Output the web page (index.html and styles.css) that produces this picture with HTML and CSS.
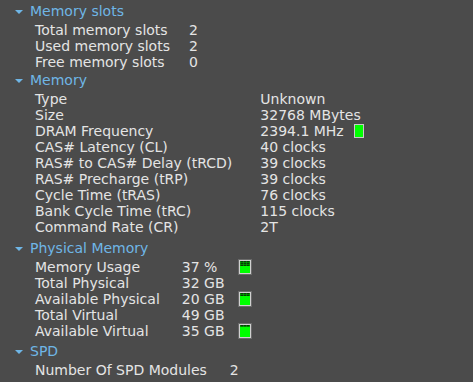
FILE: index.html
```html
<!DOCTYPE html>
<html>
<head>
<meta charset="utf-8">
<link rel="stylesheet" href="styles.css">
</head>
<body>
<div class="tree">
  <div class="section">
    <div class="head"><span class="tri"></span>Memory slots</div>
    <div class="grid">
      <span>Total memory slots</span><span>2</span>
      <span>Used memory slots</span><span>2</span>
      <span>Free memory slots</span><span>0</span>
    </div>
  </div>
  <div class="section">
    <div class="head"><span class="tri"></span>Memory</div>
    <div class="grid wide">
      <span>Type</span><span>Unknown</span>
      <span>Size</span><span>32768 MBytes</span>
      <span>DRAM Frequency</span><span>2394.1 MHz<span class="led"></span></span>
      <span>CAS# Latency (CL)</span><span>40 clocks</span>
      <span>RAS# to CAS# Delay (tRCD)</span><span>39 clocks</span>
      <span>RAS# Precharge (tRP)</span><span>39 clocks</span>
      <span>Cycle Time (tRAS)</span><span>76 clocks</span>
      <span>Bank Cycle Time (tRC)</span><span>115 clocks</span>
      <span>Command Rate (CR)</span><span>2T</span>
    </div>
  </div>
  <div class="section phys">
    <div class="head"><span class="tri"></span>Physical Memory</div>
    <div class="grid three">
      <span>Memory Usage</span><span>37 %</span><span class="meter"><span class="used" style="height:5px"></span></span>
      <span>Total Physical</span><span>32 GB</span><span></span>
      <span>Available Physical</span><span>20 GB</span><span class="meter"><span class="used" style="height:3px"></span></span>
      <span>Total Virtual</span><span>49 GB</span><span></span>
      <span>Available Virtual</span><span>35 GB</span><span class="meter"><span class="used" style="height:2px"></span></span>
    </div>
  </div>
  <div class="section spd">
    <div class="head"><span class="tri"></span>SPD</div>
    <div class="grid">
      <span>Number Of SPD Modules</span><span>2</span>
    </div>
  </div>
</div>
</body>
</html>
```
FILE: styles.css
```css
html, body {
  margin: 0;
  padding: 0;
  background: #4b4b4b;
}
body {
  width: 473px;
  height: 382px;
  overflow: hidden;
  font-family: "DejaVu Sans", Verdana, sans-serif;
  font-size: 14px;
  color: #e4e4e4;
}
.tree {
  padding-top: 1px;
}
.head {
  display: flex;
  align-items: center;
  height: 16px;
  line-height: 16px;
  padding: 2px 0 3px 15px;
  color: #6fb6e6;
}
.section + .section .head {
  padding-top: 2px;
}
.section.phys .head {
  padding-top: 5px;
}
.section.spd .head {
  padding-top: 4px;
}
.tri {
  width: 0;
  height: 0;
  border-left: 4px solid transparent;
  border-right: 4px solid transparent;
  border-top: 4px solid #6fb6e6;
  margin-right: 7px;
  margin-top: 1px;
}
.grid {
  display: grid;
  grid-template-columns: max-content max-content;
  column-gap: 19px;
  padding-left: 35px;
  line-height: 16px;
}
.grid.wide {
  column-gap: 28px;
}
.spd .grid {
  column-gap: 23px;
}
.grid.three {
  grid-template-columns: max-content max-content max-content;
  column-gap: 22px;
}
.grid.three > span:nth-child(3n) {
  margin-left: -8px;
}
.led {
  display: inline-block;
  vertical-align: top;
  margin-top: 1px;
  margin-left: 10px;
  width: 8px;
  height: 12px;
  background: #00ff00;
  border: 1px solid #c8c8c8;
}
.meter {
  display: flex;
  flex-direction: column;
  width: 10px;
  height: 12px;
  margin-top: 1px;
  background: #00ff00;
  border: 1px solid #d0d0d0;
  box-shadow: 0 0 0 1px #6a6a6a;
  overflow: hidden;
}
.meter .used {
  display: block;
  width: 100%;
  background-color: #083a08;
  background-image:
    linear-gradient(90deg, rgba(0,180,0,0.55) 1px, transparent 1px),
    linear-gradient(0deg, rgba(0,180,0,0.55) 1px, transparent 1px);
  background-size: 3px 2px;
}
```
